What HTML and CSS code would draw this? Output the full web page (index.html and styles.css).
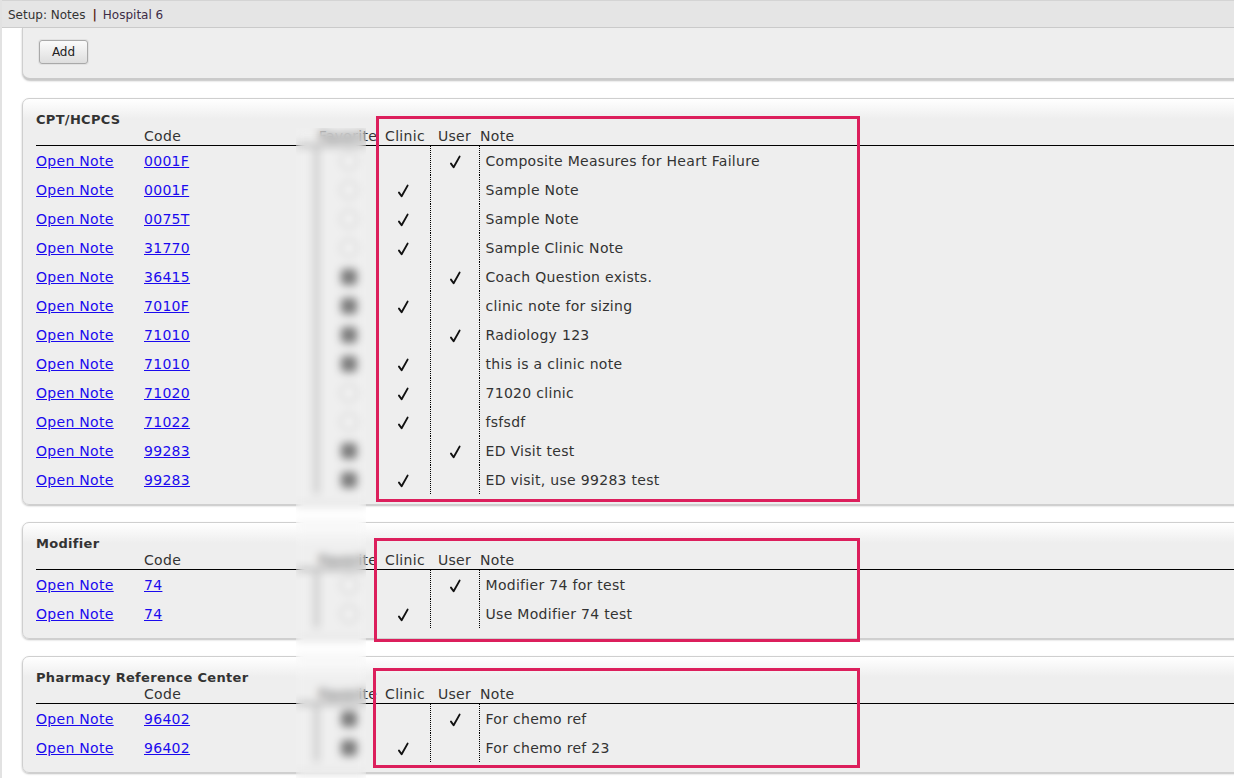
FILE: index.html
```html
<!DOCTYPE html>
<html>
<head>
<meta charset="utf-8">
<title>Setup: Notes</title>
<link rel="stylesheet" href="styles.css">
</head>
<body>
<div class="page">
  <div class="topbar"><span class="crumb">Setup: Notes</span><span class="sep">|</span><span class="org">Hospital 6</span></div>
  <div class="content">
    <div class="panel panel-top"><button class="btn">Add</button></div>

    <section class="panel">
      <h2 class="ptitle">CPT/HCPCS</h2>
      <table class="notes">
        <colgroup><col class="c-open"><col class="c-code"><col class="c-fav"><col class="c-clinic"><col class="c-user"><col></colgroup>
        <thead><tr><th class="h-left"></th><th class="h-left">Code</th><th>Favorite</th><th>Clinic</th><th>User</th><th class="h-left h-note">Note</th></tr></thead>
        <tbody>
          <tr><td><a href="#">Open Note</a></td><td><a href="#">0001F</a></td><td class="fav"><span class="radio"></span></td><td class="clinic"></td><td class="user"><svg class="chk" viewBox="0 0 12 14"><path d="M2 8.6 L4.6 12.2 L10.6 1.6"/></svg></td><td class="note">Composite Measures for Heart Failure</td></tr>
          <tr><td><a href="#">Open Note</a></td><td><a href="#">0001F</a></td><td class="fav"><span class="radio"></span></td><td class="clinic"><svg class="chk" viewBox="0 0 12 14"><path d="M2 8.6 L4.6 12.2 L10.6 1.6"/></svg></td><td class="user"></td><td class="note">Sample Note</td></tr>
          <tr><td><a href="#">Open Note</a></td><td><a href="#">0075T</a></td><td class="fav"><span class="radio"></span></td><td class="clinic"><svg class="chk" viewBox="0 0 12 14"><path d="M2 8.6 L4.6 12.2 L10.6 1.6"/></svg></td><td class="user"></td><td class="note">Sample Note</td></tr>
          <tr><td><a href="#">Open Note</a></td><td><a href="#">31770</a></td><td class="fav"><span class="radio"></span></td><td class="clinic"><svg class="chk" viewBox="0 0 12 14"><path d="M2 8.6 L4.6 12.2 L10.6 1.6"/></svg></td><td class="user"></td><td class="note">Sample Clinic Note</td></tr>
          <tr><td><a href="#">Open Note</a></td><td><a href="#">36415</a></td><td class="fav"><span class="radio on"></span></td><td class="clinic"></td><td class="user"><svg class="chk" viewBox="0 0 12 14"><path d="M2 8.6 L4.6 12.2 L10.6 1.6"/></svg></td><td class="note">Coach Question exists.</td></tr>
          <tr><td><a href="#">Open Note</a></td><td><a href="#">7010F</a></td><td class="fav"><span class="radio on"></span></td><td class="clinic"><svg class="chk" viewBox="0 0 12 14"><path d="M2 8.6 L4.6 12.2 L10.6 1.6"/></svg></td><td class="user"></td><td class="note">clinic note for sizing</td></tr>
          <tr><td><a href="#">Open Note</a></td><td><a href="#">71010</a></td><td class="fav"><span class="radio on"></span></td><td class="clinic"></td><td class="user"><svg class="chk" viewBox="0 0 12 14"><path d="M2 8.6 L4.6 12.2 L10.6 1.6"/></svg></td><td class="note">Radiology 123</td></tr>
          <tr><td><a href="#">Open Note</a></td><td><a href="#">71010</a></td><td class="fav"><span class="radio on"></span></td><td class="clinic"><svg class="chk" viewBox="0 0 12 14"><path d="M2 8.6 L4.6 12.2 L10.6 1.6"/></svg></td><td class="user"></td><td class="note">this is a clinic note</td></tr>
          <tr><td><a href="#">Open Note</a></td><td><a href="#">71020</a></td><td class="fav"><span class="radio"></span></td><td class="clinic"><svg class="chk" viewBox="0 0 12 14"><path d="M2 8.6 L4.6 12.2 L10.6 1.6"/></svg></td><td class="user"></td><td class="note">71020 clinic</td></tr>
          <tr><td><a href="#">Open Note</a></td><td><a href="#">71022</a></td><td class="fav"><span class="radio"></span></td><td class="clinic"><svg class="chk" viewBox="0 0 12 14"><path d="M2 8.6 L4.6 12.2 L10.6 1.6"/></svg></td><td class="user"></td><td class="note">fsfsdf</td></tr>
          <tr><td><a href="#">Open Note</a></td><td><a href="#">99283</a></td><td class="fav"><span class="radio on"></span></td><td class="clinic"></td><td class="user"><svg class="chk" viewBox="0 0 12 14"><path d="M2 8.6 L4.6 12.2 L10.6 1.6"/></svg></td><td class="note">ED Visit test</td></tr>
          <tr><td><a href="#">Open Note</a></td><td><a href="#">99283</a></td><td class="fav"><span class="radio on"></span></td><td class="clinic"><svg class="chk" viewBox="0 0 12 14"><path d="M2 8.6 L4.6 12.2 L10.6 1.6"/></svg></td><td class="user"></td><td class="note">ED visit, use 99283 test</td></tr>
        </tbody>
      </table>
    </section>

    <section class="panel">
      <h2 class="ptitle">Modifier</h2>
      <table class="notes">
        <colgroup><col class="c-open"><col class="c-code"><col class="c-fav"><col class="c-clinic"><col class="c-user"><col></colgroup>
        <thead><tr><th class="h-left"></th><th class="h-left">Code</th><th>Favorite</th><th>Clinic</th><th>User</th><th class="h-left h-note">Note</th></tr></thead>
        <tbody>
          <tr><td><a href="#">Open Note</a></td><td><a href="#">74</a></td><td class="fav"><span class="radio"></span></td><td class="clinic"></td><td class="user"><svg class="chk" viewBox="0 0 12 14"><path d="M2 8.6 L4.6 12.2 L10.6 1.6"/></svg></td><td class="note">Modifier 74 for test</td></tr>
          <tr><td><a href="#">Open Note</a></td><td><a href="#">74</a></td><td class="fav"><span class="radio"></span></td><td class="clinic"><svg class="chk" viewBox="0 0 12 14"><path d="M2 8.6 L4.6 12.2 L10.6 1.6"/></svg></td><td class="user"></td><td class="note">Use Modifier 74 test</td></tr>
        </tbody>
      </table>
    </section>

    <section class="panel">
      <h2 class="ptitle">Pharmacy Reference Center</h2>
      <table class="notes">
        <colgroup><col class="c-open"><col class="c-code"><col class="c-fav"><col class="c-clinic"><col class="c-user"><col></colgroup>
        <thead><tr><th class="h-left"></th><th class="h-left">Code</th><th>Favorite</th><th>Clinic</th><th>User</th><th class="h-left h-note">Note</th></tr></thead>
        <tbody>
          <tr><td><a href="#">Open Note</a></td><td><a href="#">96402</a></td><td class="fav"><span class="radio on"></span></td><td class="clinic"></td><td class="user"><svg class="chk" viewBox="0 0 12 14"><path d="M2 8.6 L4.6 12.2 L10.6 1.6"/></svg></td><td class="note">For chemo ref</td></tr>
          <tr><td><a href="#">Open Note</a></td><td><a href="#">96402</a></td><td class="fav"><span class="radio on"></span></td><td class="clinic"><svg class="chk" viewBox="0 0 12 14"><path d="M2 8.6 L4.6 12.2 L10.6 1.6"/></svg></td><td class="user"></td><td class="note">For chemo ref 23</td></tr>
        </tbody>
      </table>
    </section>
  </div>

  <div class="blur-strip"></div>
  <div class="mark mark-1"></div>
  <div class="mark mark-2"></div>
  <div class="mark mark-3"></div>
</div>
</body>
</html>
```

FILE: styles.css
```css
html, body {
  margin: 0;
  padding: 0;
  background: #fff;
  overflow: hidden;
}
body {
  font-family: "DejaVu Sans", Verdana, sans-serif;
  font-size: 13px;
  color: #333;
}
.page {
  position: relative;
  height: 778px;
  border-left: 2px solid #e2e2e2;
  box-sizing: border-box;
  overflow: hidden;
}
.topbar {
  height: 28px;
  box-sizing: border-box;
  background: #e5e5e5;
  border-top: 1px solid #d4d4d4;
  border-bottom: 1px solid #cdcdcd;
  padding-left: 6px;
  font-size: 12px;
  line-height: 28px;
  color: #333;
}
.topbar .sep {
  color: #5a1e14;
  font-weight: bold;
  margin: 0 6px 0 7px;
}
.topbar .org { color: #3d2b46; }

.content {
  display: flex;
  flex-direction: column;
  gap: 17px;
}
.panel {
  margin-left: 20px;
  margin-right: -30px;
  padding: 12px 0 10px 13px;
  border: 1px solid #cfcfcf;
  border-radius: 7px;
  background: linear-gradient(#ffffff 0, #eeeeee 20px, #eeeeee 100%);
  box-shadow: 0 1px 2px rgba(0, 0, 0, 0.25);
}
.panel-top {
  border-top: none;
  border-radius: 0 0 0 8px;
  background: #eeeeee;
  height: 52px;
  box-sizing: border-box;
  padding: 12px 0 0 16px;
  border-bottom: 2px solid #cacaca;
  margin-bottom: 1px;
}
.btn {
  font-family: "DejaVu Sans", Verdana, sans-serif;
  font-size: 12px;
  color: #222;
  width: 49px;
  height: 24px;
  padding: 0;
  border: 1px solid #a9a9a9;
  border-radius: 3px;
  background: linear-gradient(#fbfbfb, #dedede);
  box-shadow: 0 0 0 1px #e2e2e2;
}
.ptitle {
  margin: 0;
  font-size: 13px;
  font-weight: bold;
  line-height: 17px;
  letter-spacing: 0.3px;
  color: #333;
}
.notes {
  width: 100%;
  table-layout: fixed;
  border-collapse: collapse;
  font-size: 14px;
  letter-spacing: 0.3px;
}
.c-open { width: 108px; }
.c-code { width: 172px; }
.c-fav { width: 64px; }
.c-clinic { width: 50px; }
.c-user { width: 49px; }
.notes th {
  font-weight: normal;
  line-height: 17px;
  padding: 0;
  text-align: center;
  color: #333;
  border-bottom: 1px solid #000;
  white-space: nowrap;
}
.notes th.h-left { text-align: left; }
.notes th.h-note { padding-left: 1px; }
.notes td {
  height: 29px;
  padding: 0;
  vertical-align: middle;
  white-space: nowrap;
}
.notes a {
  color: #1a0aee;
  text-decoration: underline;
}
.notes td.fav {
  text-align: center;
  border-left: 3px solid #a8a8a8;
}
.radio {
  display: inline-block;
  width: 12px;
  height: 12px;
  border-radius: 50%;
  background: #fff;
  border: 2px solid #bcbcbc;
  vertical-align: middle;
}
.radio.on {
  border-radius: 4px;
  background: #6e6e6e;
  border-color: #6e6e6e;
}
.notes td.clinic, .notes td.user {
  text-align: center;
}
.notes td.clinic { padding-right: 3px; }
.notes td.user, .notes td.note {
  border-left: 1px dotted #000;
}
.notes td.note { padding-left: 6px; }
.chk {
  width: 12px;
  height: 14px;
  vertical-align: middle;
  margin-top: 3px;
}
.chk path {
  fill: none;
  stroke: #111;
  stroke-width: 1.9;
  stroke-linecap: round;
  stroke-linejoin: round;
}

.blur-strip {
  position: absolute;
  left: 294px;
  top: 128px;
  width: 70px;
  bottom: 0;
  backdrop-filter: blur(4px);
  -webkit-backdrop-filter: blur(4px);
  background: rgba(255, 255, 255, 0.08);
}
.mark {
  position: absolute;
  border: 3px solid #dc1f5c;
  box-sizing: border-box;
}
.mark-1 { left: 374px; top: 116px; width: 484px; height: 386px; }
.mark-2 { left: 372px; top: 538px; width: 486px; height: 104px; }
.mark-3 { left: 371px; top: 668px; width: 487px; height: 100px; }
```
